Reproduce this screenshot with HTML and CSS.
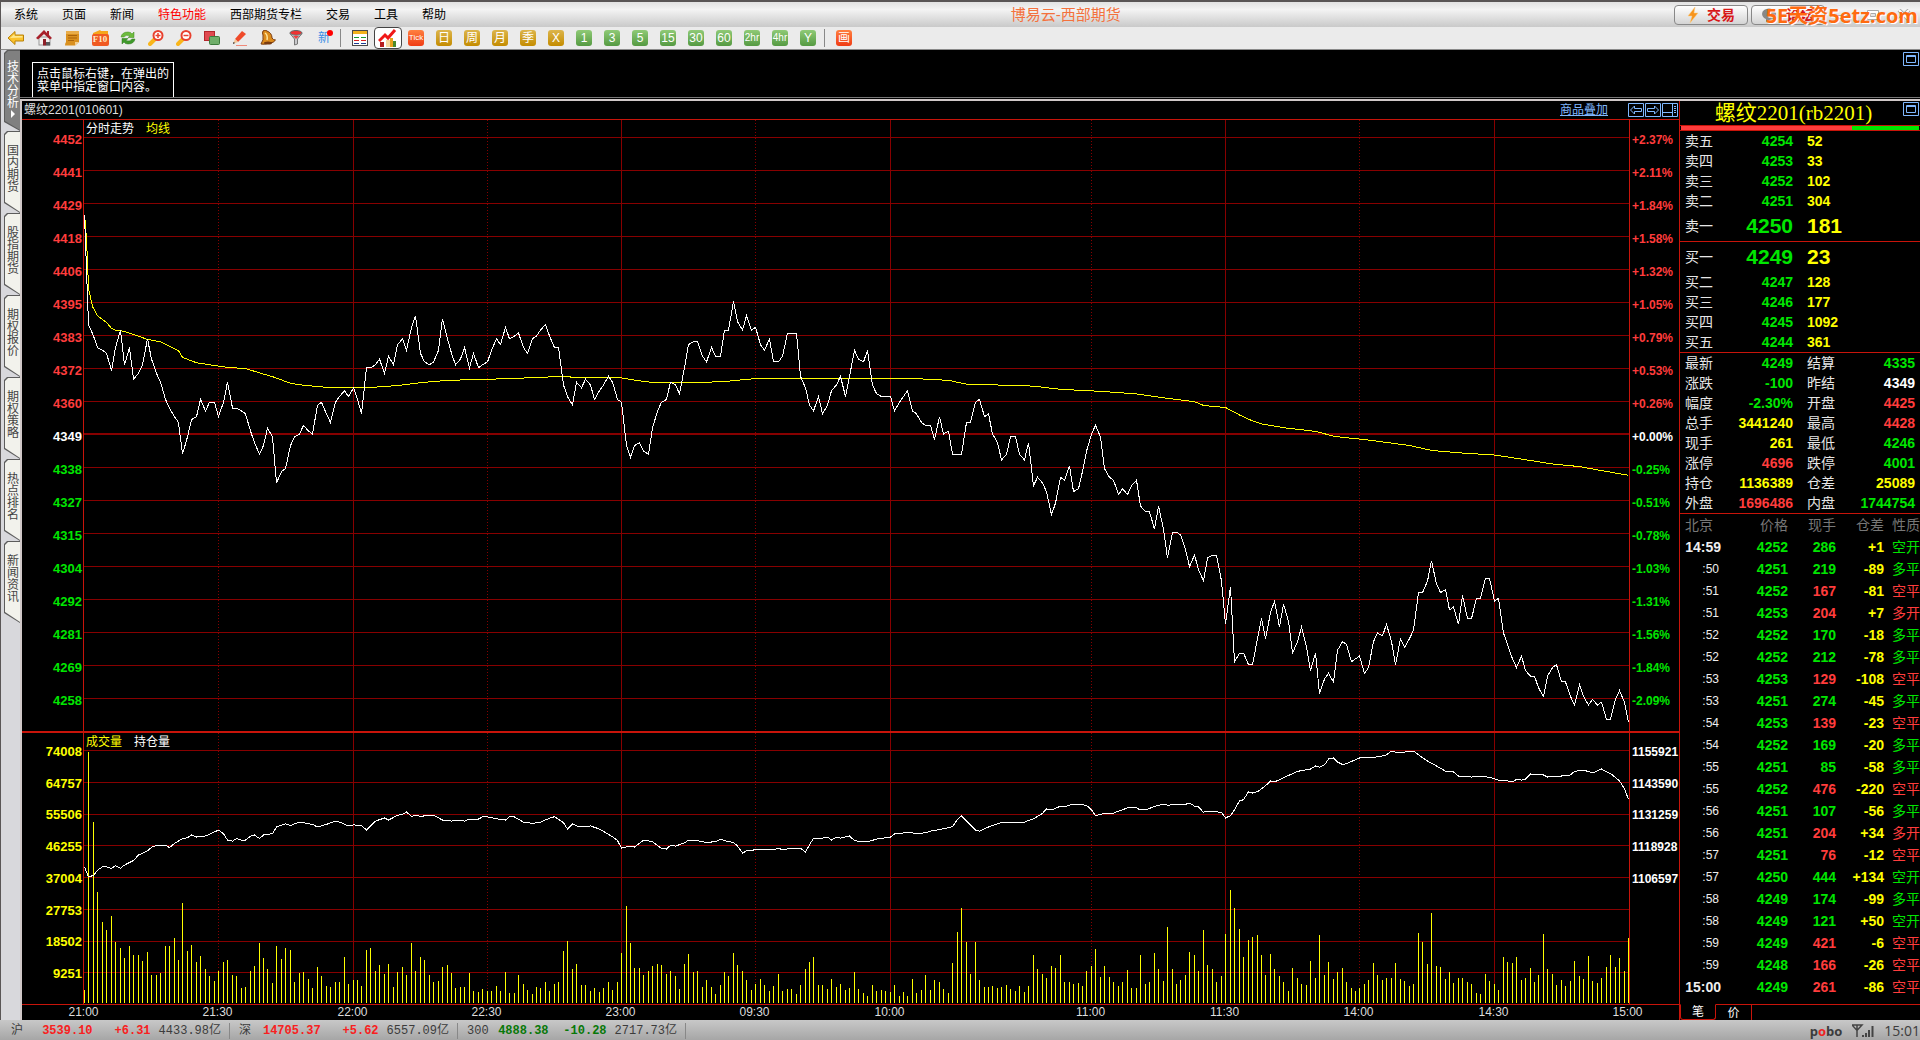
FILE: index.html
```html
<!DOCTYPE html>
<html lang="zh-CN">
<head>
    <meta charset="UTF-8">
    <meta name="viewport" content="width=device-width, initial-scale=1.0">
    <title>博易云-西部期货</title>
    <link rel="stylesheet" href="styles.css">
</head>
<body>
    <header class="titlebar">
        <nav class="menu">
            <a href="#">系统</a>
            <a href="#">页面</a>
            <a href="#">新闻</a>
            <a href="#" class="hot">特色功能</a>
            <a href="#">西部期货专栏</a>
            <a href="#">交易</a>
            <a href="#">工具</a>
            <a href="#">帮助</a>
        </nav>
        <h1 class="app-name">博易云-西部期货</h1>
        <div class="window-tools">
            <button class="pill">
                <svg width="12" height="16" viewBox="0 0 12 16"><path d="M8 0 L1 9 L5 9 L3 16 L11 6 L7 6 Z" fill="#f7941d" stroke="#fbd08a" stroke-width="0.5"/></svg>
                交易
            </button>
            <button class="pill">
                <svg width="16" height="14" viewBox="0 0 16 14"><ellipse cx="7" cy="6" rx="7" ry="5.5" fill="#888"/><path d="M4 10 L4 14 L9 11 Z" fill="#888"/><circle cx="11" cy="8" r="3" fill="#aaa"/></svg>
                论坛
            </button>
            <button class="win" aria-label="最小化"><svg width="14" height="12"><rect x="1.5" y="6.5" width="11" height="3" fill="#fff" stroke="#aaa"/></svg></button>
            <button class="win" aria-label="还原"><svg width="14" height="12"><path d="M1.5 1.5h11v9h-11z M4.5 4.5h5v3h-5z" fill="#fff" fill-rule="evenodd" stroke="#aaa"/></svg></button>
            <button class="win" aria-label="关闭"><svg width="14" height="12"><path d="M2 1 L12 11 M12 1 L2 11" stroke="#aaa" stroke-width="4"/><path d="M2 1 L12 11 M12 1 L2 11" stroke="#fff" stroke-width="2"/></svg></button>
        </div>
        <div class="mark">5E天资5etz.com</div>
    </header>

    <div class="toolbar">
        <button aria-label="后退"><svg width="18" height="16" viewBox="0 0 18 16"><path d="M1 8 L8 1.5 V5 H16.5 V11 H8 V14.5 Z" fill="#fbc22c" stroke="#b98208"/><path d="M3 8 L7.5 4 V6 H15.5 V7.5 Z" fill="#fde78c"/></svg></button>
        <button aria-label="首页"><svg width="16" height="16" viewBox="0 0 16 16"><rect x="3" y="7" width="11" height="8" fill="#f3f0ee" stroke="#999"/><path d="M8 0 L0 8 L2 9.5 L8 4 L14 9.5 L16 8 L13 5 V1 H11 V3 Z" fill="#a8202a"/><rect x="7" y="9" width="3" height="6.5" fill="#8e1f28"/><rect x="10" y="12" width="4" height="3.5" fill="#58595b"/></svg></button>
        <button aria-label="公告"><svg width="16" height="16" viewBox="0 0 16 16"><path d="M2 1 H15 V12 L11 15.5 H1 Q1 13 2 12 Z" fill="#d9901f"/><path d="M2 1 H15 V4 H2 Z" fill="#e9ad4a"/><path d="M4 5.5H13M4 8H13M4 10.5H10" stroke="#a9630c"/><path d="M11 15.5 V12 H15 Z" fill="#f3cf90"/></svg></button>
        <button aria-label="F10"><svg width="17" height="16" viewBox="0 0 17 16"><path d="M1 3 L8 0 L9 1 H16 V5 H1 Z" fill="#f6a61c"/><rect x="0" y="4" width="17" height="12" rx="2" fill="#f05a22"/></svg><span class="f10">F10</span></button>
        <button aria-label="刷新"><svg width="16" height="16" viewBox="0 0 16 16"><path d="M1 7 Q2 2 8 2 Q11 2 12 4 L14 2 V7.5 H8 L10 6 Q6 4 4 7 Z" fill="#6dbb3c" stroke="#3c8a1c" stroke-width="0.5"/><path d="M15 9 Q14 14 8 14 Q5 14 4 12 L2 14 V8.5 H8 L6 10.5 Q10 12 12 9 Z" fill="#3f9a2b" stroke="#2c7519" stroke-width="0.5"/></svg></button>
        <button aria-label="放大"><svg width="16" height="16" viewBox="0 0 16 16"><path d="M7 9 L2 14" stroke="#f9b61b" stroke-width="4" stroke-linecap="round"/><circle cx="10" cy="5.5" r="4.5" fill="#fff" stroke="#e8412f" stroke-width="2"/><path d="M7.5 5.5H12.5M10 3V8" stroke="#e8412f" stroke-width="1.5"/></svg></button>
        <button aria-label="缩小"><svg width="16" height="16" viewBox="0 0 16 16"><path d="M7 9 L2 14" stroke="#f9b61b" stroke-width="4" stroke-linecap="round"/><circle cx="10" cy="5.5" r="4.5" fill="#fff" stroke="#e8412f" stroke-width="2"/><path d="M7.5 5.5H12.5" stroke="#e8412f" stroke-width="1.5"/></svg></button>
        <button aria-label="叠加"><svg width="16" height="16" viewBox="0 0 16 16"><rect x="0.5" y="1.5" width="10" height="9" fill="#e04a50" stroke="#b3262c"/><rect x="5.5" y="6.5" width="10" height="8" rx="1" fill="#6fae6a" stroke="#3c7a3c"/></svg></button>
        <button aria-label="画线"><svg width="16" height="16" viewBox="0 0 16 16"><path d="M3 9 L10 1 L14 4 L6 12 Z" fill="#ef4a2a"/><path d="M3 9 L6 12 L1 14 Z" fill="#f2c79a"/><path d="M1 14 L3 13 L1.5 12 Z" fill="#222"/><path d="M4 15.5 H15" stroke="#f08a7a"/></svg></button>
        <button aria-label="预警"><svg width="16" height="16" viewBox="0 0 16 16"><path d="M3 1 Q5 -1 7 1 Q12 3 12 8 Q13 10 15.5 10 Q14 13 9 13 Q4 15 1 14 Q4 10 3 5 Q2 3 3 1 Z" fill="#dc8b1c" stroke="#7a3b10"/><path d="M5 3 Q8 5 7 10" stroke="#ffe29a" stroke-width="1.5" fill="none"/><ellipse cx="8" cy="13" rx="4" ry="1.5" fill="#7a3b10"/></svg></button>
        <button aria-label="筛选"><svg width="14" height="16" viewBox="0 0 14 16"><ellipse cx="7" cy="3" rx="6" ry="2.5" fill="#e33" stroke="#666"/><path d="M1 3.5 L5.5 9 V15 L8.5 14 V9 L13 3.5 Q7 7 1 3.5 Z" fill="#c9c9cc" stroke="#777"/><path d="M4 6 L7 9 L10 6 Z" fill="#e44"/></svg></button>
        <button class="new">新<i></i></button>
        <span class="sep"></span>
        <button aria-label="报价"><svg width="16" height="16" viewBox="0 0 16 16" shape-rendering="crispEdges"><rect x="0.5" y="0.5" width="15" height="15" fill="#fff" stroke="#4a4a4a"/><path d="M1 2.5H15" stroke="#f2b21c" stroke-width="3"/><path d="M2 7.5H7M9 7.5H14" stroke="#169c2e"/><path d="M2 10.5H7M9 10.5H14" stroke="#d81f1f"/><path d="M2 13.5H7M9 13.5H14" stroke="#1c3d94"/></svg></button>
        <button class="pressed" aria-label="分时图"><svg width="20" height="18" viewBox="0 0 20 18"><rect x="2" y="13" width="4" height="5" fill="#b61c1c"/><rect x="8" y="11" width="4" height="7" fill="#f6d9a0"/><rect x="12" y="9" width="3" height="9" fill="#e8a21c"/><rect x="15" y="12" width="3" height="6" fill="#4a8a2a"/><path d="M1 12 L7 6 L10 9 L17 1" stroke="#f01818" stroke-width="3" fill="none"/></svg></button>
        <button><span class="badge red">Tick</span></button>
        <button><span class="badge gold">日</span></button>
        <button><span class="badge gold">周</span></button>
        <button><span class="badge gold">月</span></button>
        <button><span class="badge gold">季</span></button>
        <button><span class="badge gold">X</span></button>
        <button><span class="badge green">1</span></button>
        <button><span class="badge green">3</span></button>
        <button><span class="badge green">5</span></button>
        <button><span class="badge green">15</span></button>
        <button><span class="badge green">30</span></button>
        <button><span class="badge green">60</span></button>
        <button><span class="badge green small">2hr</span></button>
        <button><span class="badge green small">4hr</span></button>
        <button><span class="badge green">Y</span></button>
        <span class="sep"></span>
        <button><span class="badge red draw">画</span></button>
    </div>

    <main class="workspace">
        <nav class="side">
            <button class="side-tab active"><span>技术分析</span><i></i></button>
            <button class="side-tab"><span>国内期货</span></button>
            <button class="side-tab"><span>股指期货</span></button>
            <button class="side-tab"><span>期权报价</span></button>
            <button class="side-tab"><span>期权策略</span></button>
            <button class="side-tab"><span>热点排名</span></button>
            <button class="side-tab"><span>新闻资讯</span></button>
        </nav>

        <div class="content">
            <section class="empty-pane">
                <p class="hint">点击鼠标右键，在弹出的<br>菜单中指定窗口内容。</p>
                <button class="box-btn" aria-label="最大化"><svg width="16" height="14"><path d="M.5.5h15v13h-15z M3.5 3.5h9v7h-9z M3 4.5h10" fill="none" stroke="#80b8ff"/></svg></button>
            </section>

            <div class="panes">
                <section class="chart">
                    <div class="chart-head">
                        <span>螺纹2201(010601)</span>
                        <a href="#" class="overlay-link">商品叠加</a>
                        <div class="chart-btns">
                            <button class="box-btn" aria-label="上一个"><svg width="16" height="14"><path d="M.5.5h15v13h-15z M2.5 7L6.5 3V5.5H13.5V8.5H6.5V11Z" fill="none" stroke="#80b8ff"/></svg></button>
                            <button class="box-btn" aria-label="下一个"><svg width="16" height="14"><path d="M.5.5h15v13h-15z M13.5 7L9.5 3V5.5H2.5V8.5H9.5V11Z" fill="none" stroke="#80b8ff"/></svg></button>
                            <button class="box-btn" aria-label="布局"><svg width="16" height="14"><path d="M.5.5h15v13h-15z M10.5 1V13M1 9.5H10M12 3.5h2M12 5.5h2M12 7.5h2M12 9.5h2" fill="none" stroke="#80b8ff"/></svg></button>
                        </div>
                    </div>

                    <div class="band price-band">
                        <ul class="axis left" id="priceAxis"></ul>
                        <div class="plot">
                            <svg id="pricePlot"></svg>
                            <div class="legend"><span>分时走势</span><span class="yellow">均线</span></div>
                        </div>
                        <ul class="axis right" id="pctAxis"></ul>
                    </div>

                    <div class="band vol-band">
                        <ul class="axis left yellow" id="volAxis"></ul>
                        <div class="plot">
                            <svg id="volPlot"></svg>
                            <div class="legend"><span class="yellow">成交量</span><span>持仓量</span></div>
                        </div>
                        <ul class="axis right" id="holdAxis"></ul>
                    </div>

                    <div class="times"><svg id="timeAxis"></svg></div>
                </section>

                <aside class="quote">
                    <div class="quote-head">
                        <h2>螺纹2201(rb2201)</h2>
                        <button class="box-btn" aria-label="最大化报价"><svg width="16" height="14"><path d="M.5.5h15v13h-15z M3.5 3.5h9v7h-9z M3 4.5h10" fill="none" stroke="#80b8ff"/></svg></button>
                    </div>
                    <div class="ratio"><div class="ratio-sell" style="width: 72%"></div></div>

                    <table class="book">
                        <tr><th>卖五</th><td>4254</td><td>52</td></tr>
                        <tr><th>卖四</th><td>4253</td><td>33</td></tr>
                        <tr><th>卖三</th><td>4252</td><td>102</td></tr>
                        <tr><th>卖二</th><td>4251</td><td>304</td></tr>
                        <tr class="best"><th>卖一</th><td>4250</td><td>181</td></tr>
                    </table>
                    <table class="book">
                        <tr class="best"><th>买一</th><td>4249</td><td>23</td></tr>
                        <tr><th>买二</th><td>4247</td><td>128</td></tr>
                        <tr><th>买三</th><td>4246</td><td>177</td></tr>
                        <tr><th>买四</th><td>4245</td><td>1092</td></tr>
                        <tr><th>买五</th><td>4244</td><td>361</td></tr>
                    </table>
                    <table class="detail">
                        <tr><th>最新</th><td class="down">4249</td><th>结算</th><td class="down">4335</td></tr>
                        <tr><th>涨跌</th><td class="down">-100</td><th>昨结</th><td>4349</td></tr>
                        <tr><th>幅度</th><td class="down">-2.30%</td><th>开盘</th><td class="up">4425</td></tr>
                        <tr><th>总手</th><td class="yellow">3441240</th><th>最高</th><td class="up">4428</td></tr>
                        <tr><th>现手</th><td class="yellow">261</td><th>最低</th><td class="down">4246</td></tr>
                        <tr><th>涨停</th><td class="up">4696</td><th>跌停</th><td class="down">4001</td></tr>
                        <tr><th>持仓</th><td class="yellow">1136389</td><th>仓差</th><td class="yellow">25089</td></tr>
                        <tr><th>外盘</th><td class="up">1696486</td><th>内盘</th><td class="down">1744754</td></tr>
                    </table>
                    <table class="ticks">
                        <thead><tr><th>北京</th><th>价格</th><th>现手</th><th>仓差</th><th>性质</th></tr></thead>
                        <tbody id="ticks"></tbody>
                    </table>
                    <div class="quote-tabs">
                        <button class="on">笔</button>
                        <button>价</button>
                    </div>
                </aside>
            </div>
        </div>
    </main>

    <footer class="status">
        <div class="index"><span>沪</span><b class="rise">3539.10</b><b class="rise">+6.31</b><span>4433.98亿</span></div>
        <div class="index"><span>深</span><b class="rise">14705.37</b><b class="rise">+5.62</b><span>6557.09亿</span></div>
        <div class="index"><span>300</span><b class="fall">4888.38</b><b class="fall">-10.28</b><span>2717.73亿</span></div>
        <div class="status-right">
            <span class="pobo">p<em>o</em>bo</span>
            <svg width="22" height="14" viewBox="0 0 22 14"><path d="M0 1H10L5 6.5Z M5 1V13" fill="none" stroke="#444" stroke-width="1.5"/><path d="M11 13V11M14 13V9M17 13V6M20.5 13V2" stroke="#444" stroke-width="2"/></svg>
            <span>15:01</span>
        </div>
    </footer>

    <script src="chart.js"></script>
</body>
</html>
```
FILE: styles.css
```css
* {
    box-sizing: border-box;
}

body {
    margin: 0;
    height: 100vh;
    display: flex;
    flex-direction: column;
    overflow: hidden;
    background: #000;
    color: #fff;
    font: 12px/14px "Liberation Sans", "Noto Sans CJK SC", sans-serif;
}

button {
    font: inherit;
    color: inherit;
    padding: 0;
    border: 0;
    background: none;
    cursor: pointer;
}

svg {
    display: block;
}

ul {
    margin: 0;
    padding: 0;
    list-style: none;
}

.yellow { color: #ff0; }
.up { color: #ff3c3c; }
.down { color: #00e600; }

/* 标题栏 */
.titlebar {
    position: relative;
    flex: none;
    height: 27px;
    display: flex;
    align-items: center;
    border-top: 2px solid #5a5656;
    border-left: 1px solid #5a5656;
    background: linear-gradient(#e2e2e2, #f4f4f4 30%, #c9c9c9);
    color: #000;
}

.menu {
    flex: 5 1 0;
    display: flex;
    gap: 24px;
    padding-left: 13px;
}

.menu a {
    color: #000;
    text-decoration: none;
}

.menu .hot {
    color: #f00;
}

.app-name {
    margin: 0;
    font-size: 15px;
    font-weight: normal;
    color: #f4713c;
}

.window-tools {
    flex: 4 1 0;
    display: flex;
    justify-content: flex-end;
    align-items: center;
    gap: 3px;
    padding-right: 2px;
}

.pill {
    width: 74px;
    height: 20px;
    display: flex;
    align-items: center;
    justify-content: center;
    gap: 8px;
    border: 1px solid #888;
    border-radius: 4px;
    background: linear-gradient(#fff, #d4d4d4);
    color: #d81818;
    font-size: 14px;
    font-weight: bold;
}

.win {
    width: 28px;
    display: flex;
    justify-content: center;
}

.mark {
    position: absolute;
    top: 0;
    right: 2px;
    font: bold 20px/27px "Open Sans", "Noto Sans CJK SC", sans-serif;
    color: #ff6a10;
    text-shadow: 1px 1px 0 #fff;
}

/* 工具栏 */
.toolbar {
    flex: none;
    height: 23px;
    display: flex;
    align-items: center;
    padding-left: 1px;
    border-left: 1px solid #5a5656;
    border-bottom: 1px solid #8a8a8a;
    background: #ebebeb;
}

.toolbar button {
    position: relative;
    width: 28px;
    height: 22px;
    display: flex;
    align-items: center;
    justify-content: center;
}

.toolbar .pressed {
    border: 1px solid #444;
    border-radius: 4px;
    background: #fff;
}

.f10 {
    position: absolute;
    top: 6px;
    left: 0;
    width: 100%;
    text-align: center;
    font: bold 9px/12px "Liberation Serif", serif;
    color: #ffe9c4;
}

.toolbar .new {
    color: #3c8ee6;
}

.new i {
    position: absolute;
    top: 3px;
    right: 5px;
    width: 6px;
    height: 6px;
    border-radius: 50%;
    background: #f00;
}

.sep {
    width: 8px;
    height: 18px;
    background: linear-gradient(#888, #888) 2px 0 / 1px 100% no-repeat;
}

.badge {
    width: 16px;
    height: 16px;
    border-radius: 3px;
    color: #fff;
    font-size: 12px;
    line-height: 16px;
    text-align: center;
    white-space: nowrap;
}

.badge.gold { background: linear-gradient(#dcb54c, #c48c00); }
.badge.green { background: linear-gradient(#8fca76, #559a42); }
.badge.red { background: linear-gradient(#ff8040, #f03c14); font-size: 8px; }
.badge.draw { font-size: 12px; }
.badge.small { font-size: 10px; }

/* 主体 */
.workspace {
    flex: 1;
    min-height: 0;
    display: flex;
}

.side {
    flex: none;
    width: 20px;
    padding-left: 3px;
    border-left: 1px solid #5a5656;
    background: #d8d8dc;
}

.side-tab {
    position: relative;
    display: block;
    width: 100%;
    height: 82px;
    padding: 14px 1px 0 3px;
    background: #5c5c5c;
    color: #444;
    line-height: 12px;
    clip-path: polygon(3px 0, 100% 0, 100% 100%, 0 72px, 0 3px);
}

.side-tab::before {
    content: "";
    position: absolute;
    inset: 1px 0 1px 1px;
    background: #f2f2ec;
    clip-path: polygon(3px 0, 100% 0, 100% 100%, 0 70px, 0 3px);
}

.side-tab span {
    position: relative;
    display: block;
    height: 68px;
    word-break: break-all;
}

.side-tab.active {
    height: 81px;
    padding-top: 8px;
    color: #fff;
}

.side-tab.active::before {
    background: #808080;
}

.side-tab.active i {
    position: absolute;
    left: 7px;
    top: 60px;
    border-left: 4px solid #fff;
    border-top: 4px solid transparent;
    border-bottom: 4px solid transparent;
}

.content {
    flex: 1;
    min-width: 0;
    display: flex;
    flex-direction: column;
}

.empty-pane {
    flex: none;
    height: 48px;
    display: flex;
    justify-content: space-between;
    padding: 2px 1px 0 12px;
    border-bottom: 1px solid #777;
}

.hint {
    align-self: flex-end;
    margin: 0;
    padding: 5px 4px 3px;
    border: 1px solid #fff;
    border-bottom: 0;
    line-height: 13px;
}

.box-btn {
    flex: none;
    align-self: flex-start;
}

.panes {
    flex: 1;
    min-height: 0;
    display: flex;
    margin-top: 1px;
    border-top: 2px solid #d0c8c8;
    border-left: 2px solid #d0c8c8;
}

/* 走势图 */
.chart {
    flex: 1;
    min-width: 0;
    display: flex;
    flex-direction: column;
    border-right: 1px solid #c8140a;
}

.chart-head {
    flex: none;
    height: 18px;
    display: flex;
    align-items: center;
    padding: 0 1px 0 2px;
    color: #ddd;
}

.overlay-link {
    margin-left: auto;
    margin-right: 20px;
    color: #80b8ff;
}

.chart-btns {
    display: flex;
    gap: 1px;
}

.band {
    flex: 1;
    min-height: 0;
    display: flex;
    border-top: 1px solid #c8140a;
}

.vol-band {
    flex: none;
    height: 274px;
    border-top-width: 2px;
    border-bottom: 1px solid #c8140a;
}

.axis {
    flex: none;
    display: flex;
    flex-direction: column;
    padding: 3px 0 14px;
    font-weight: bold;
}

.axis li {
    flex: 1;
    display: flex;
    align-items: center;
}

.axis.left {
    width: 61px;
    font-size: 13px;
}

.axis.left li {
    justify-content: flex-end;
    padding-right: 1px;
}

.axis.right {
    width: 49px;
    padding-left: 2px;
}

.plot {
    position: relative;
    flex: 1;
    min-width: 0;
    border-left: 1px solid #c8140a;
    border-right: 1px solid #c8140a;
}

.plot svg {
    position: absolute;
    width: 100%;
    height: 100%;
    shape-rendering: crispEdges;
}

.plot line { stroke: #870000; }
.plot .mid { stroke-width: 2; }
.plot .dots { stroke-dasharray: 1 2; }
.plot .bar { stroke: #ff0; }
.plot polyline { fill: none; stroke: #fff; }
.plot .avg { stroke: #ff0; }

.legend {
    position: absolute;
    top: 2px;
    left: 2px;
    display: flex;
    gap: 12px;
}

.times {
    flex: none;
    height: 15px;
    padding: 0 50px 0 62px;
}

.times svg {
    width: 100%;
    height: 15px;
    overflow: visible;
}

.times text {
    fill: #ddd;
    text-anchor: middle;
}

/* 报价 */
.quote {
    flex: none;
    width: 240px;
    display: flex;
    flex-direction: column;
    font-size: 14px;
    line-height: 20px;
}

.quote-head {
    flex: none;
    height: 24px;
    display: flex;
    padding: 1px 1px 0 0;
}

.quote h2 {
    flex: 1;
    margin: 0;
    padding-left: 4px;
    text-align: center;
    font: 21px/22px "Liberation Serif", "Noto Sans CJK SC", serif;
    color: #ff0;
}

.ratio {
    flex: none;
    height: 6px;
    padding: 0 1px;
    border-top: 1px solid #c8140a;
    border-bottom: 1px solid #c8140a;
    background: #00e600 content-box;
}

.ratio-sell {
    height: 100%;
    background: #ff3c3c;
}

.quote table {
    width: 100%;
    table-layout: fixed;
    border-collapse: collapse;
}

.quote th {
    padding: 0;
    font-weight: normal;
    text-align: left;
    color: #e6e6e6;
}

.quote td {
    padding: 0;
    font-weight: bold;
    text-align: right;
}

.quote .book,
.quote .detail {
    border-collapse: separate;
    border-spacing: 0;
    border-bottom: 1px solid #c8140a;
}

.book tr, .detail tr {
    height: 20px;
}

.book tr.best {
    height: 30px;
}

.quote .book th,
.quote .detail th {
    width: 45px;
    padding-left: 5px;
}

.quote .book td:nth-child(2) {
    width: 68px;
    color: #00e600;
}

.quote .book td:last-child {
    padding-left: 14px;
    text-align: left;
    color: #ff0;
}

.book .best td {
    font-size: 21px;
}

.detail td:nth-child(2) {
    width: 68px;
}

.quote .detail th:nth-child(3) {
    width: 56px;
    padding-left: 14px;
}

.quote .detail td:last-child {
    padding-right: 5px;
}

.ticks tr {
    height: 22px;
}

.quote .ticks th {
    color: #777;
    text-align: right;
}

.quote .ticks th:nth-child(1) {
    width: 60px;
    padding-left: 5px;
    text-align: left;
}

.ticks th:nth-child(2) { width: 48px; }
.ticks th:nth-child(3) { width: 48px; }
.ticks th:nth-child(4) { width: 48px; }

.quote .ticks td:first-child {
    padding: 0 19px 0 5px;
    color: #eee;
}

.quote .ticks td.sec {
    padding-right: 21px;
    font-size: 12px;
    font-weight: normal;
}

.quote .ticks td:last-child {
    font-weight: normal;
}

.quote-tabs {
    margin-top: auto;
    height: 16px;
    flex: none;
    display: flex;
    border-top: 1px solid #c8140a;
    font-size: 12px;
    line-height: 14px;
}

.quote-tabs button {
    width: 36px;
    border-right: 1px solid #c8140a;
}

.quote-tabs .on {
    margin-top: -1px;
    border: 1px solid #c8140a;
    border-top: 1px solid #000;
    border-radius: 0 0 3px 3px;
}

/* 状态栏 */
.status {
    flex: none;
    height: 20px;
    display: flex;
    align-items: center;
    padding: 2px 0 0 2px;
    background: linear-gradient(#c8c8c8, #a6a6a6);
    color: #3c3c3c;
    font: 12px/16px "Liberation Mono", "Noto Sans CJK SC", monospace;
    white-space: nowrap;
}

.index {
    flex: none;
    width: 228px;
    display: flex;
    gap: 8px;
    justify-content: flex-end;
    padding-right: 8px;
    border-right: 1px solid #888;
}

.index span:first-child {
    margin-right: auto;
    padding-left: 9px;
}

.index b:nth-child(3) {
    min-width: 50px;
    text-align: right;
}

.rise { color: #f82020; }
.fall { color: #087808; }

.status-right {
    margin-left: auto;
    display: flex;
    align-items: center;
    gap: 10px;
    font: 14px/16px "Open Sans", sans-serif;
}

.pobo {
    font-size: 13px;
    font-weight: bold;
}

.pobo em {
    font-style: normal;
    color: #e22;
}
```
FILE: chart.js
```javascript
// 每分钟价格 21:00 - 15:00
const prices = [
    4425,4387,4383,4379,4378,4377,4371,4379,4385,4373,4379,4368,4370,4373,4382,4375,4370,4367,4361,4358,
    4355,4353,4342,4348,4354,4355,4361,4357,4360,4360,4355,4360,4367,4358,4358,4357,4356,4350,4346,4342,
    4345,4351,4348,4332,4336,4337,4345,4348,4349,4352,4350,4349,4359,4360,4356,4353,4360,4362,4364,4362,
    4365,4361,4356,4372,4372,4373,4375,4370,4376,4373,4380,4382,4378,4386,4390,4377,4374,4373,4374,4378,
    4389,4382,4377,4373,4375,4379,4372,4377,4372,4373,4374,4378,4382,4380,4386,4382,4383,4384,4379,4377,
    4382,4383,4385,4387,4383,4379,4379,4366,4362,4359,4367,4365,4368,4366,4361,4364,4366,4369,4367,4361,
    4360,4345,4341,4345,4346,4343,4342,4351,4357,4360,4361,4367,4366,4363,4372,4380,4381,4381,4376,4374,
    4379,4376,4376,4385,4385,4395,4388,4385,4390,4385,4386,4380,4378,4382,4374,4374,4376,4384,4384,4384,
    4369,4365,4359,4357,4362,4356,4359,4364,4366,4369,4362,4369,4378,4375,4374,4378,4366,4363,4362,4362,
    4362,4357,4360,4362,4364,4357,4356,4353,4352,4352,4347,4355,4349,4350,4342,4342,4342,4353,4353,4360,
    4361,4355,4356,4349,4346,4340,4342,4348,4348,4342,4340,4346,4331,4334,4332,4329,4321,4325,4334,4333,
    4338,4329,4330,4336,4343,4349,4352,4348,4337,4334,4333,4328,4330,4328,4331,4333,4324,4322,4322,4316,
    4324,4316,4306,4315,4315,4314,4309,4303,4307,4302,4298,4306,4307,4307,4298,4283,4296,4270,4273,4273,
    4269,4269,4278,4285,4278,4287,4291,4282,4290,4284,4273,4277,4282,4275,4267,4273,4259,4264,4266,4263,
    4274,4277,4276,4270,4271,4272,4266,4268,4277,4280,4279,4283,4277,4269,4278,4275,4278,4281,4294,4294,
    4298,4305,4297,4294,4295,4288,4289,4283,4293,4285,4285,4292,4292,4299,4299,4291,4292,4280,4276,4271,
    4268,4272,4267,4265,4265,4261,4258,4265,4268,4269,4263,4263,4258,4255,4262,4258,4255,4257,4255,4256,
    4250,4250,4257,4260,4256,4249
];

// 均线 [分钟, 价格]
const average = [
    [0,4425],[0.3,4421.8],[0.5,4415.7],[0.7,4409.3],[1,4399.5],[1.8,4393.2],[3,4390],[5,4387.7],[6,4385.6],
    [7,4385],[9,4384.6],[14,4381.8],[17,4381],[21,4377.9],[22,4375.6],[25,4373.7],[32,4372.1],[36,4371.7],
    [39,4370.2],[42,4368.9],[46,4366.6],[49,4365.9],[54,4365.2],[64.5,4365.2],[70,4365.8],[75,4366.8],
    [81,4367.6],[95,4368.2],[107,4369],[109,4368.7],[119,4368.7],[123.6,4367.5],[128,4366.7],[135,4366.7],
    [143,4367.2],[149,4368.1],[160,4368.4],[163,4368.1],[187,4368.1],[193,4367.6],[197,4366.3],[204,4366],
    [212,4365.6],[218,4364.5],[227,4363.8],[235,4362.9],[240,4361.8],[245,4360.8],[248,4360.2],[250,4358.9],
    [255,4358.2],[258,4355.6],[260,4354.1],[263,4352.5],[268,4351.2],[275,4349.9],[279.5,4348.1],[286.5,4347],
    [296,4345],[301,4343.3],[308,4342.4],[315,4341.7],[321,4340.3],[328,4338.6],[334,4337.7],[339,4336.3],[345,4334.7]
];

// 成交量，单位百手
const volumes = [
    40,751,541,331,241,217,259,184,166,136,172,145,145,127,154,85,85,91,172,172,
    193,130,298,157,175,124,142,103,82,67,97,124,130,85,82,46,49,97,112,181,
    136,103,61,172,133,166,160,64,91,94,73,46,109,82,52,49,64,64,139,58,
    70,70,52,160,166,97,115,88,118,49,94,109,85,181,97,139,130,85,64,67,
    109,115,91,46,49,49,91,37,34,43,37,37,52,37,94,31,31,85,58,40,
    28,49,46,64,37,58,64,157,187,103,118,55,55,37,46,34,46,64,40,64,
    151,289,181,106,106,85,97,112,118,115,88,97,82,43,118,148,94,97,49,70,
    49,28,55,94,82,151,115,97,70,40,58,73,55,37,52,88,37,43,43,28,
    55,103,124,139,55,55,43,73,49,58,40,46,94,43,31,22,55,37,40,37,
    34,55,22,34,22,73,31,40,85,40,70,64,43,31,121,211,283,184,88,184,
    70,49,49,52,46,49,55,43,37,52,34,52,145,103,88,76,112,106,145,64,
    64,58,61,52,97,112,163,79,112,79,64,52,64,100,46,46,145,58,64,151,
    103,67,226,103,58,70,85,154,145,97,217,115,103,64,82,205,337,283,220,139,
    190,196,202,145,85,148,103,82,64,37,106,76,58,55,127,76,202,85,124,73,
    94,106,64,46,37,46,58,70,121,85,70,76,76,121,73,67,52,58,208,184,
    118,268,112,109,73,94,61,76,76,64,58,31,28,88,67,58,40,139,124,121,
    139,70,76,106,64,85,205,103,88,55,70,52,67,127,82,73,142,67,61,76,
    109,145,109,136,97,193
];

// 持仓量 [分钟, 千手]
const holding = [
    [0,1110.5],[1,1106.6],[2,1107.2],[3,1109.2],[4,1110.5],[5,1110.5],[6,1109.9],[7,1111],[8,1110],[9,1111.2],
    [11,1113],[12,1115.1],[14,1116.7],[15,1118.1],[16,1118.9],[18,1118.9],[19,1118],[20,1119.6],[22,1121.5],
    [23,1121.8],[24,1122.9],[25,1122.1],[27,1122.5],[30,1124.8],[31,1123.4],[32,1120.9],[33,1120.5],[34,1121.5],
    [35,1120.9],[36,1120.9],[37,1122.4],[38,1122.9],[39,1121.5],[40,1122.9],[42,1123.4],[43,1126],[45,1127.2],
    [46,1126.6],[48,1127.9],[51,1127],[52,1126],[54,1127],[56,1128.3],[57,1127.9],[59,1126.4],[60,1126.8],
    [62,1126.6],[63,1124.8],[65,1128.3],[67,1129.5],[68,1128.7],[70,1130.5],[71,1130.9],[72,1131.8],[73,1130.1],
    [74,1130.6],[75,1130.1],[77,1130.6],[78,1130.6],[80,1128.7],[82,1128.3],[84,1128.7],[85,1128.3],[86,1129.1],
    [88,1129.1],[89,1129.9],[90,1129.9],[92,1129.2],[94,1128.7],[95,1130],[96,1129.9],[98,1127.9],[100,1127.4],
    [102,1127.9],[104,1129.4],[105,1130],[107,1127.7],[108,1125.2],[109,1127.2],[110,1126.4],[112,1126.1],
    [113,1126.4],[115,1125.2],[118,1122.2],[119,1120.7],[120,1117.8],[122,1118.6],[123,1118.2],[125,1120.9],
    [127,1120.3],[129,1117.7],[130,1117.4],[131,1118.9],[132,1118.6],[134,1119.8],[135,1120.9],[137,1120.7],
    [139,1120],[141,1120.3],[142,1121.3],[143,1120.7],[145,1120],[146,1118.6],[147,1115.9],[148,1116.7],
    [149,1116.7],[150,1117.4],[151,1117.1],[154,1117.1],[155,1117.8],[156,1117.1],[158,1117.8],[160,1117.8],
    [161,1116.3],[163,1121.7],[164,1121.4],[166,1122.1],[167,1120.9],[168,1122.1],[169,1121.7],[171,1122.5],
    [172,1120.7],[174,1120.2],[175,1120.2],[177,1121.3],[180,1122.1],[181,1123.3],[183,1123.7],[185,1123.7],
    [186,1123.3],[188,1123.8],[189,1124.4],[192,1125.3],[194,1126.1],[195,1129],[196,1130.3],[198,1126.8],
    [199,1124.8],[200,1124.4],[202,1126],[205,1127.8],[210,1127.9],[212,1129.2],[214,1131.3],[215,1133],
    [216,1132.6],[218,1134.1],[219,1133.8],[220,1134.5],[222,1134.9],[224,1134.4],[225,1132.7],[226,1130.3],
    [227,1131],[230,1131.4],[233,1133.4],[235,1133.4],[236,1132.6],[237,1132.6],[239,1134],[241,1134.9],
    [242,1134.5],[246,1134.8],[247,1135.3],[248,1134.1],[249,1133.8],[250,1131.7],[251,1132.2],[254,1131.7],
    [255,1129.5],[256,1130.4],[257,1132.7],[258,1136.1],[259,1136.6],[260,1139.7],[261,1139.2],[262,1139.7],
    [264,1142],[265,1143.9],[266,1143.5],[267,1144.4],[271,1147.6],[274,1148.5],[275,1149.7],[276,1149.2],
    [277,1150.1],[278,1152.4],[279,1152.8],[280,1151.2],[281,1150.3],[282,1150.6],[285,1152.8],[289,1153.2],
    [291,1154],[292,1155.5],[293,1155.1],[295,1155.1],[296,1155.5],[297,1155.5],[298,1154],[300,1151.6],
    [302,1149.7],[304,1147.7],[306,1147.4],[307,1145.8],[310,1145.4],[311,1145.8],[314,1145.3],[316,1144.2],
    [318,1143.9],[319,1143.5],[320,1144.5],[321,1144.2],[322,1144.6],[323,1146.6],[326,1146.2],[327,1145.4],
    [328,1145.8],[330,1145.8],[332,1146.2],[333,1147.6],[335,1148.1],[337,1147],[339,1148.5],[340,1147.4],
    [341,1146.8],[343,1143.9],[344,1140.8],[345,1136.7]
];

const times = [
    [0,"21:00"],[30,"21:30"],[60,"22:00"],[90,"22:30"],[120,"23:00"],[150,"09:30"],
    [180,"10:00"],[225,"11:00"],[255,"11:30"],[285,"14:00"],[315,"14:30"],[345,"15:00"]
];
const dotted = [30, 90, 150, 225, 285];

const priceLabels = [4452,4441,4429,4418,4406,4395,4383,4372,4360,4349,4338,4327,4315,4304,4292,4281,4269,4258];
const pctLabels = ["+2.37%","+2.11%","+1.84%","+1.58%","+1.32%","+1.05%","+0.79%","+0.53%","+0.26%","+0.00%",
    "-0.25%","-0.51%","-0.78%","-1.03%","-1.31%","-1.56%","-1.84%","-2.09%"];
const volLabels = [74008,64757,55506,46255,37004,27753,18502,9251];
const holdLabels = [1155921,1143590,1131259,1118928,1106597,"","",""];

// 时间 价格 现手 仓差 性质
const ticks = [
    ["14:59",4252,286,"+1","空开"],[":50",4251,219,"-89","多平"],[":51",4252,167,"-81","空平"],
    [":51",4253,204,"+7","多开"],[":52",4252,170,"-18","多平"],[":52",4252,212,"-78","多平"],
    [":53",4253,129,"-108","空平"],[":53",4251,274,"-45","多平"],[":54",4253,139,"-23","空平"],
    [":54",4252,169,"-20","多平"],[":55",4251,85,"-58","多平"],[":55",4252,476,"-220","空平"],
    [":56",4251,107,"-56","多平"],[":56",4251,204,"+34","多开"],[":57",4251,76,"-12","空平"],
    [":57",4250,444,"+134","空开"],[":58",4249,174,"-99","多平"],[":58",4249,121,"+50","空开"],
    [":59",4249,421,"-6","空平"],[":59",4248,166,"-26","空平"],["15:00",4249,261,"-86","空平"]
];

const $ = (id) => document.getElementById(id);

function fillAxis(id, labels, colored) {
    $(id).innerHTML = labels.map((t, i) => {
        const cls = !colored || i === 9 ? "" : i < 9 ? "up" : "down";
        return `<li class="${cls}">${t}</li>`;
    }).join("");
}

function fillTicks() {
    $("ticks").innerHTML = ticks.map(([time, price, vol, diff, kind]) => {
        const cls = kind === "空平" || kind === "多开" ? "up" : "down";
        const sec = time[0] === ":" ? "sec" : "";
        return `<tr><td class="${sec}">${time}</td><td class="down">${price}</td><td class="${cls}">${vol}</td>` +
            `<td class="yellow">${diff}</td><td class="${cls}">${kind}</td></tr>`;
    }).join("");
}

function line(x1, y1, x2, y2, cls) {
    return `<line x1="${x1}" y1="${y1}" x2="${x2}" y2="${y2}" class="${cls || ""}"/>`;
}

function draw() {
    const w = $("pricePlot").clientWidth;
    const h = $("pricePlot").clientHeight;
    const vh = $("volPlot").clientHeight;
    const px = (i) => Math.round(i * (w - 1) / 345) + 0.5;

    let cols = "";
    let volCols = "";
    times.slice(1, -1).forEach(([i]) => {
        const cls = dotted.includes(i) ? "dots" : "";
        cols += line(px(i), 0, px(i), h, cls);
        volCols += line(px(i), 0, px(i), vh, cls);
    });

    // 分时走势
    const step = (h - 17) / 18;
    const py = (p) => 17 + step * 9 + (4349 - p) * step / 11.445;
    let out = "";
    for (let k = 0; k < 18; k++) {
        const y = Math.round(17 + step * k);
        out += k === 9 ? line(0, y, w, y, "mid") : line(0, y + 0.5, w, y + 0.5);
    }
    out += cols;
    out += `<polyline class="avg" points="${average.map(([i, p]) => px(i) + "," + py(p)).join(" ")}"/>`;
    out += `<polyline points="${prices.map((p, i) => px(i) + "," + py(p)).join(" ")}"/>`;
    $("pricePlot").innerHTML = out;

    // 成交量和持仓量
    const vstep = (vh - 17) / 8;
    out = "";
    for (let k = 0; k < 8; k++) {
        const y = Math.round(17 + vstep * k) + 0.5;
        out += line(0, y, w, y);
    }
    out += volCols;
    volumes.forEach((v, i) => {
        out += line(px(i), vh - 1, px(i), vh - 1 - v * vstep / 95, "bar");
    });
    const hy = (v) => 17 + (1155.9 - v) * vstep / 12.331;
    out += `<polyline points="${holding.map(([i, v]) => px(i) + "," + hy(v)).join(" ")}"/>`;
    $("volPlot").innerHTML = out;

    $("timeAxis").innerHTML = times.map(([i, t]) => `<text x="${px(i) - 1}" y="11">${t}</text>`).join("");
}

fillAxis("priceAxis", priceLabels, true);
fillAxis("pctAxis", pctLabels, true);
fillAxis("volAxis", volLabels);
fillAxis("holdAxis", holdLabels);
fillTicks();
draw();
window.addEventListener("resize", draw);
```
